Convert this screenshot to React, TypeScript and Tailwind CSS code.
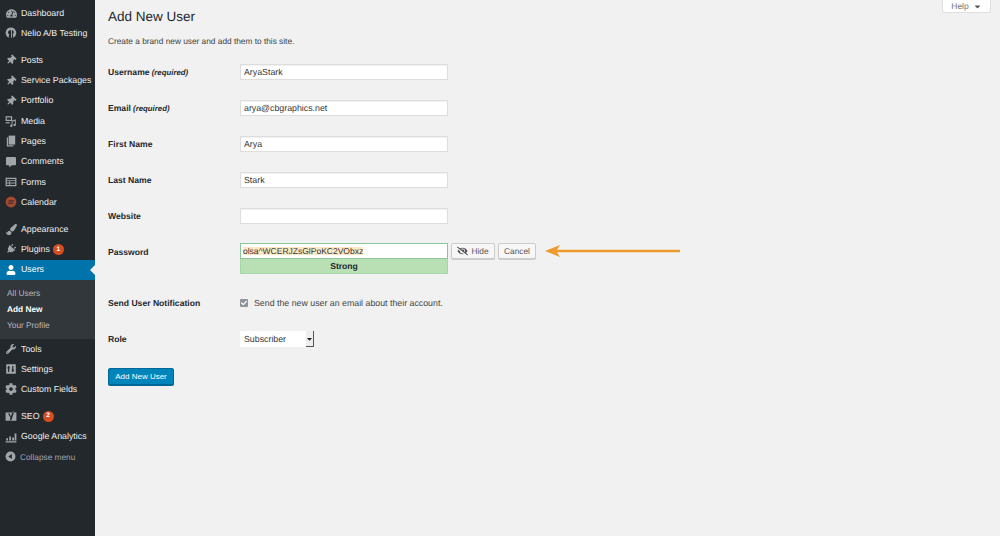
import type { ReactNode } from 'react';
import {
  FaTachometerAlt,
  FaThumbtack,
  FaCommentAlt,
  FaPlug,
  FaUser,
  FaWrench,
  FaCog,
  FaEyeSlash,
  FaCheck,
  FaCaretDown,
  FaPaintBrush,
} from 'react-icons/fa';

const font = 'font-["Liberation_Sans",Arial,sans-serif] [text-rendering:geometricPrecision]';

const NelioIcon = () => (
  <svg viewBox="0 0 20 20" className="h-[12px] w-[12px]" fill="currentColor">
    <path d="M10 1a9 9 0 0 0-4 17l1-6c-1-.5-2-1.600-2-3 0-2.500 2-4 5-4v13h1.500V5.200c1.800.4 3 1.900 3 3.800 0 1.300-.7 2.400-1.700 3l1 6A9 9 0 0 0 10 1z" />
  </svg>
);

const MediaIcon = () => (
  <svg viewBox="0 0 20 20" className="h-[12px] w-[12px]" fill="currentColor">
    <path d="M1 2h11v8H1V2zm2 2v4h7V4H3z" fillRule="evenodd" />
    <path d="M18 7v9.500a2 2 0 1 1-1.500-1.900V10l-4 1v7a2 2 0 1 1-1.500-1.900V9.500L18 7z" />
    <path d="M1 12h7v2H1z" />
  </svg>
);

const PagesIcon = () => (
  <svg viewBox="0 0 20 20" className="h-[12px] w-[12px]" fill="currentColor">
    <path d="M6 1h11v15H6z" />
    <path d="M3 4h2v13h9v2H3z" />
  </svg>
);

const FormsIcon = () => (
  <svg viewBox="0 0 20 20" className="h-[12px] w-[12px]" fill="currentColor">
    <path
      fillRule="evenodd"
      d="M1 3h18v14H1V3zm2 2v2h14V5H3zm0 3.500V11h4V8.500H3zm5.500 0V11H17V8.500H8.500zM3 12.500V15h4v-2.500H3zm5.500 0V15H17v-2.500H8.500z"
    />
  </svg>
);

const CalendarIcon = () => (
  <svg viewBox="0 0 20 20" className="h-[12px] w-[12px]">
    <circle cx="10" cy="10" r="9" fill="#a4492f" />
    <path d="M6 7h9v2H6zM5 11h9v2H5z" fill="#3d3230" />
  </svg>
);

const SettingsIcon = () => (
  <svg viewBox="0 0 20 20" className="h-[12px] w-[12px]" fill="currentColor">
    <path
      fillRule="evenodd"
      d="M2 2h16v16H2V2zm3 3v2H4v2h1v6h2V9h1V7H7V5H5zm7 0v6h-1v2h1v2h2v-2h1v-2h-1V5h-2z"
    />
  </svg>
);

const YoastIcon = () => (
  <svg viewBox="0 0 20 20" className="h-[12px] w-[12px]" fill="currentColor">
    <path fillRule="evenodd" d="M1 4H19V18H1ZM5 6H7.500L10 11 12.500 3H15.500L10.500 17H8L9 12.500Z" />
  </svg>
);

const AnalyticsIcon = () => (
  <svg viewBox="0 0 20 20" className="h-[12px] w-[12px]" fill="currentColor">
    <path d="M1 17h18v2H1zM2 12h3v4H2zM7 9h3v7H7zM12 11h3v5h-3zM16 4h3v12h-3z" />
  </svg>
);

const CollapseIcon = () => (
  <svg viewBox="0 0 20 20" className="h-[11px] w-[11px]" fill="currentColor">
    <path fillRule="evenodd" d="M10 1a9 9 0 1 1 0 18 9 9 0 0 1 0-18zm2.500 4.500L6 10l6.500 4.500v-9z" />
  </svg>
);

const Badge = ({ n }: { n: number }) => (
  <span className="ml-[3px] flex h-[11px] w-[11px] items-center justify-center rounded-full bg-[#d54e21] text-[6.500px] font-bold text-white">
    {n}
  </span>
);

const MenuItem = ({ icon, label, badge, active }: { icon: ReactNode; label: string; badge?: number; active?: boolean }) => (
  <div className={`relative flex h-[20.300px] items-center ${active ? 'bg-[#0073aa] text-white' : 'text-[#eeeeee]'}`}>
    <span className={`flex w-[21px] justify-center pl-[1px] ${active ? 'text-white' : 'text-[#a0a5aa]'}`}>{icon}</span>
    <span className="text-[8.800px] leading-none">{label}</span>
    {badge ? <Badge n={badge} /> : null}
    {active ? (
      <span className="absolute right-0 top-1/2 h-0 w-0 -translate-y-1/2 border-y-[5px] border-r-[5px] border-y-transparent border-r-[#f1f1f1]" />
    ) : null}
  </div>
);

const SubItem = ({ label, current }: { label: string; current?: boolean }) => (
  <div className={`flex h-[16.300px] items-center pl-[7px] text-[8.300px] leading-none ${current ? 'font-bold text-white' : 'text-[#b4b9be]'}`}>
    {label}
  </div>
);

const Sidebar = () => (
  <aside className="flex h-[536px] w-[95px] shrink-0 flex-col bg-[#23282d] pt-[3px]">
    <MenuItem icon={<FaTachometerAlt className="h-[11px] w-[11px]" />} label="Dashboard" />
    <MenuItem icon={<NelioIcon />} label="Nelio A/B Testing" />
    <div className="h-[6.500px]" />
    <MenuItem icon={<FaThumbtack className="h-[10px] w-[10px] rotate-45" />} label="Posts" />
    <MenuItem icon={<FaThumbtack className="h-[10px] w-[10px] rotate-45" />} label="Service Packages" />
    <MenuItem icon={<FaThumbtack className="h-[10px] w-[10px] rotate-45" />} label="Portfolio" />
    <MenuItem icon={<MediaIcon />} label="Media" />
    <MenuItem icon={<PagesIcon />} label="Pages" />
    <MenuItem icon={<FaCommentAlt className="h-[10px] w-[10px]" />} label="Comments" />
    <MenuItem icon={<FormsIcon />} label="Forms" />
    <MenuItem icon={<CalendarIcon />} label="Calendar" />
    <div className="h-[6.500px]" />
    <MenuItem icon={<FaPaintBrush className="h-[11px] w-[11px]" />} label="Appearance" />
    <MenuItem icon={<FaPlug className="h-[10px] w-[10px] rotate-45" />} label="Plugins" badge={1} />
    <MenuItem icon={<FaUser className="h-[10px] w-[10px]" />} label="Users" active />
    <div className="bg-[#32373c] pb-[5px] pt-[5px]">
      <SubItem label="All Users" />
      <SubItem label="Add New" current />
      <SubItem label="Your Profile" />
    </div>
    <MenuItem icon={<FaWrench className="h-[10px] w-[10px]" />} label="Tools" />
    <MenuItem icon={<SettingsIcon />} label="Settings" />
    <MenuItem icon={<FaCog className="h-[12px] w-[12px]" />} label="Custom Fields" />
    <div className="h-[6.500px]" />
    <MenuItem icon={<YoastIcon />} label="SEO" badge={2} />
    <MenuItem icon={<AnalyticsIcon />} label="Google Analytics" />
    <div className="flex h-[20.300px] items-center text-[#a0a5aa]">
      <span className="flex w-[20px] justify-center">
        <CollapseIcon />
      </span>
      <span className="text-[8.300px] leading-none">Collapse menu</span>
    </div>
  </aside>
);

const Row = ({ label, hint, children }: { label: string; hint?: string; children?: ReactNode }) => (
  <div className="flex h-[36px] items-center">
    <div className="w-[132px] shrink-0 text-[8.600px] font-bold leading-none text-[#23282d]">
      {label}
      {hint ? <em className="text-[7.800px]"> ({hint})</em> : null}
    </div>
    {children}
  </div>
);

const TextField = ({ value }: { value?: string }) => (
  <div className="flex h-[16px] w-[208px] items-center border border-[#dddddd] bg-white px-[3px] text-[8.800px] leading-none text-[#32373c] shadow-[inset_0_1px_1px_rgba(0,0,0,0.06)]">
    {value}
  </div>
);

const SmallButton = ({ className, children }: { className: string; children: ReactNode }) => (
  <div className={`flex h-[16px] items-center justify-center gap-[3px] rounded-[2px] border border-[#cccccc] bg-[#f7f7f7] text-[8.300px] leading-none text-[#555555] shadow-[0_1px_0_#cccccc] ${className}`}>
    {children}
  </div>
);

export default function App() {
  return (
    <div className={`relative flex h-[536px] w-[1000px] overflow-hidden bg-[#f1f1f1] ${font}`}>
      <Sidebar />
      <main className="flex-1 pl-[13px]">
        <h1 className="flex h-[34px] items-center text-[13.500px] font-normal leading-none text-[#23282d]">Add New User</h1>
        <p className="mt-[2px] h-[11px] text-[8.300px] leading-[11px] text-[#444444]">
          Create a brand new user and add them to this site.
        </p>
        <div className="h-[7px]" />
        <Row label="Username" hint="required">
          <TextField value="AryaStark" />
        </Row>
        <Row label="Email" hint="required">
          <TextField value="arya@cbgraphics.net" />
        </Row>
        <Row label="First Name">
          <TextField value="Arya" />
        </Row>
        <Row label="Last Name">
          <TextField value="Stark" />
        </Row>
        <Row label="Website">
          <TextField />
        </Row>
        <div className="flex h-[51px] pt-[9px]">
          <div className="flex h-[18px] w-[132px] shrink-0 items-center text-[8.600px] font-bold leading-none text-[#23282d]">
            Password
          </div>
          <div className="flex flex-col">
            <div className="flex items-center">
              <div className="flex h-[16px] w-[208px] items-center border border-[#8cc79a] bg-white px-[2px] text-[8.500px] leading-none text-[#32373c]">
                <span className="bg-[#fde8c4]">olsa^WCERJZsGlPoKC2VObxz</span>
              </div>
              <div className="ml-[3px]">
                <SmallButton className="w-[44px]">
                  <FaEyeSlash className="h-[10px] w-[11px]" />
                  Hide
                </SmallButton>
              </div>
              <div className="ml-[3px]">
                <SmallButton className="w-[38px]">Cancel</SmallButton>
              </div>
              <svg viewBox="0 0 135 14" className="ml-[9px] h-[14px] w-[135px]">
                <path d="M0 7 15 1 12 5.800H135V8.200H12L15 13Z" fill="#ee9a2e" />
              </svg>
            </div>
            <div className="flex h-[15px] w-[208px] items-center justify-center border border-t-0 border-[#a5d6a5] bg-[#b9e0b4] text-[8.600px] font-bold leading-none text-[#23282d]">
              Strong
            </div>
          </div>
        </div>
        <Row label="Send User Notification">
          <div className="flex items-center text-[8.800px] leading-none text-[#444444]">
            <span className="mr-[6px] flex h-[8px] w-[8px] items-center justify-center rounded-[1px] bg-[#8f9499] text-white">
              <FaCheck className="h-[6px] w-[6px]" />
            </span>
            Send the new user an email about their account.
          </div>
        </Row>
        <Row label="Role">
          <div className="flex h-[16px] w-[74px] items-center justify-between bg-white pl-[4px] text-[8.800px] leading-none text-[#32373c]">
            Subscriber
            <span className="flex h-full w-[8px] items-center justify-center border-b border-r border-[#555555] bg-[#eeeeee] text-[#222222]">
              <FaCaretDown className="h-[8px] w-[8px]" />
            </span>
          </div>
        </Row>
        <button className="mt-[11px] flex h-[17px] w-[66px] items-center justify-center rounded-[2px] border border-[#006799] bg-[#0085ba] text-[8px] leading-none text-white shadow-[0_1px_0_#006799]">
          Add New User
        </button>
      </main>
      <div className="absolute right-[9px] top-0 flex h-[13px] w-[49px] items-center justify-center gap-[4px] rounded-b-[3px] border border-t-0 border-[#dfdfdf] bg-white text-[8.500px] leading-none text-[#72777c]">
        Help
        <FaCaretDown className="h-[9px] w-[9px] text-[#555555]" />
      </div>
    </div>
  );
}
